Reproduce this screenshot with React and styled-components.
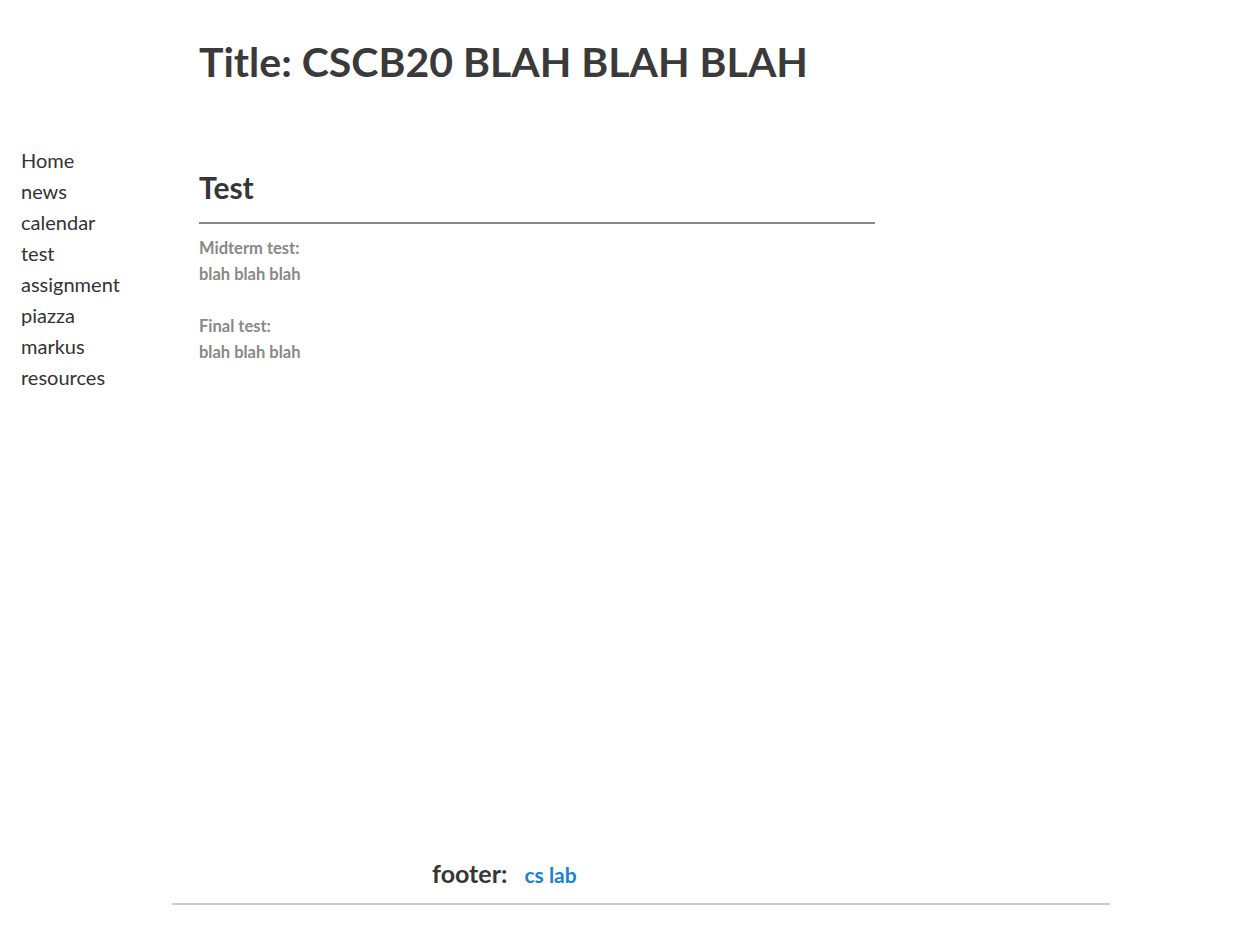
import React from 'react';
import styled, { createGlobalStyle } from 'styled-components';

const GlobalStyle = createGlobalStyle`
  html, body {
    margin: 0;
    padding: 0;
    background: #fff;
  }

  body {
    font-family: Lato, "Open Sans", sans-serif;
    color: #363636;
  }
`;

const Page = styled.div`
  display: flex;
  flex-direction: column;
  min-height: 100vh;
  box-sizing: border-box;
  padding-bottom: 20px;
`;

const Header = styled.header`
  padding: 36px 0 0 199px;
`;

const Title = styled.h1`
  margin: 0;
  font-size: 41px;
  font-weight: 700;
  line-height: 52px;
  color: #3a3a3a;
`;

const Body = styled.div`
  flex: 1;
  display: grid;
  grid-template-columns: 199px 676px;
  margin-top: 57px;
`;

const Nav = styled.nav`
  display: flex;
  flex-direction: column;
  padding-left: 21px;
`;

const NavLink = styled.a`
  font-size: 20px;
  line-height: 31px;
  color: #333;
  text-decoration: none;
`;

const Main = styled.main`
  padding-top: 24px;
`;

const SectionTitle = styled.h2`
  margin: 0 0 11px;
  padding-bottom: 17px;
  font-size: 30px;
  font-weight: 700;
  line-height: 36px;
  color: #363636;
  border-bottom: 2px solid #888;
`;

const Entry = styled.p`
  margin: 0 0 26px;
  font-size: 16.5px;
  font-weight: 700;
  line-height: 26px;
  color: #888;
`;

const Footer = styled.footer`
  display: flex;
  align-items: baseline;
  gap: 17px;
  margin: 0 148px 0 172px;
  padding: 0 0 15px 260px;
  border-bottom: 2px solid #ccc;
`;

const FooterLabel = styled.span`
  font-size: 25px;
  font-weight: 700;
  color: #363636;
`;

const FooterLink = styled.a`
  font-size: 21px;
  font-weight: 700;
  color: #1a80da;
  text-decoration: none;
`;

const links = ['Home', 'news', 'calendar', 'test', 'assignment', 'piazza', 'markus', 'resources'];

export default function App() {
  return (
    <Page>
      <GlobalStyle />
      <Header>
        <Title>Title: CSCB20 BLAH BLAH BLAH</Title>
      </Header>
      <Body>
        <Nav>
          {links.map(l => (
            <NavLink key={l} href="#">{l}</NavLink>
          ))}
        </Nav>
        <Main>
          <SectionTitle>Test</SectionTitle>
          <Entry>
            Midterm test:<br />
            blah blah blah
          </Entry>
          <Entry>
            Final test:<br />
            blah blah blah
          </Entry>
        </Main>
      </Body>
      <Footer>
        <FooterLabel>footer:</FooterLabel>
        <FooterLink href="#">cs lab</FooterLink>
      </Footer>
    </Page>
  );
}
